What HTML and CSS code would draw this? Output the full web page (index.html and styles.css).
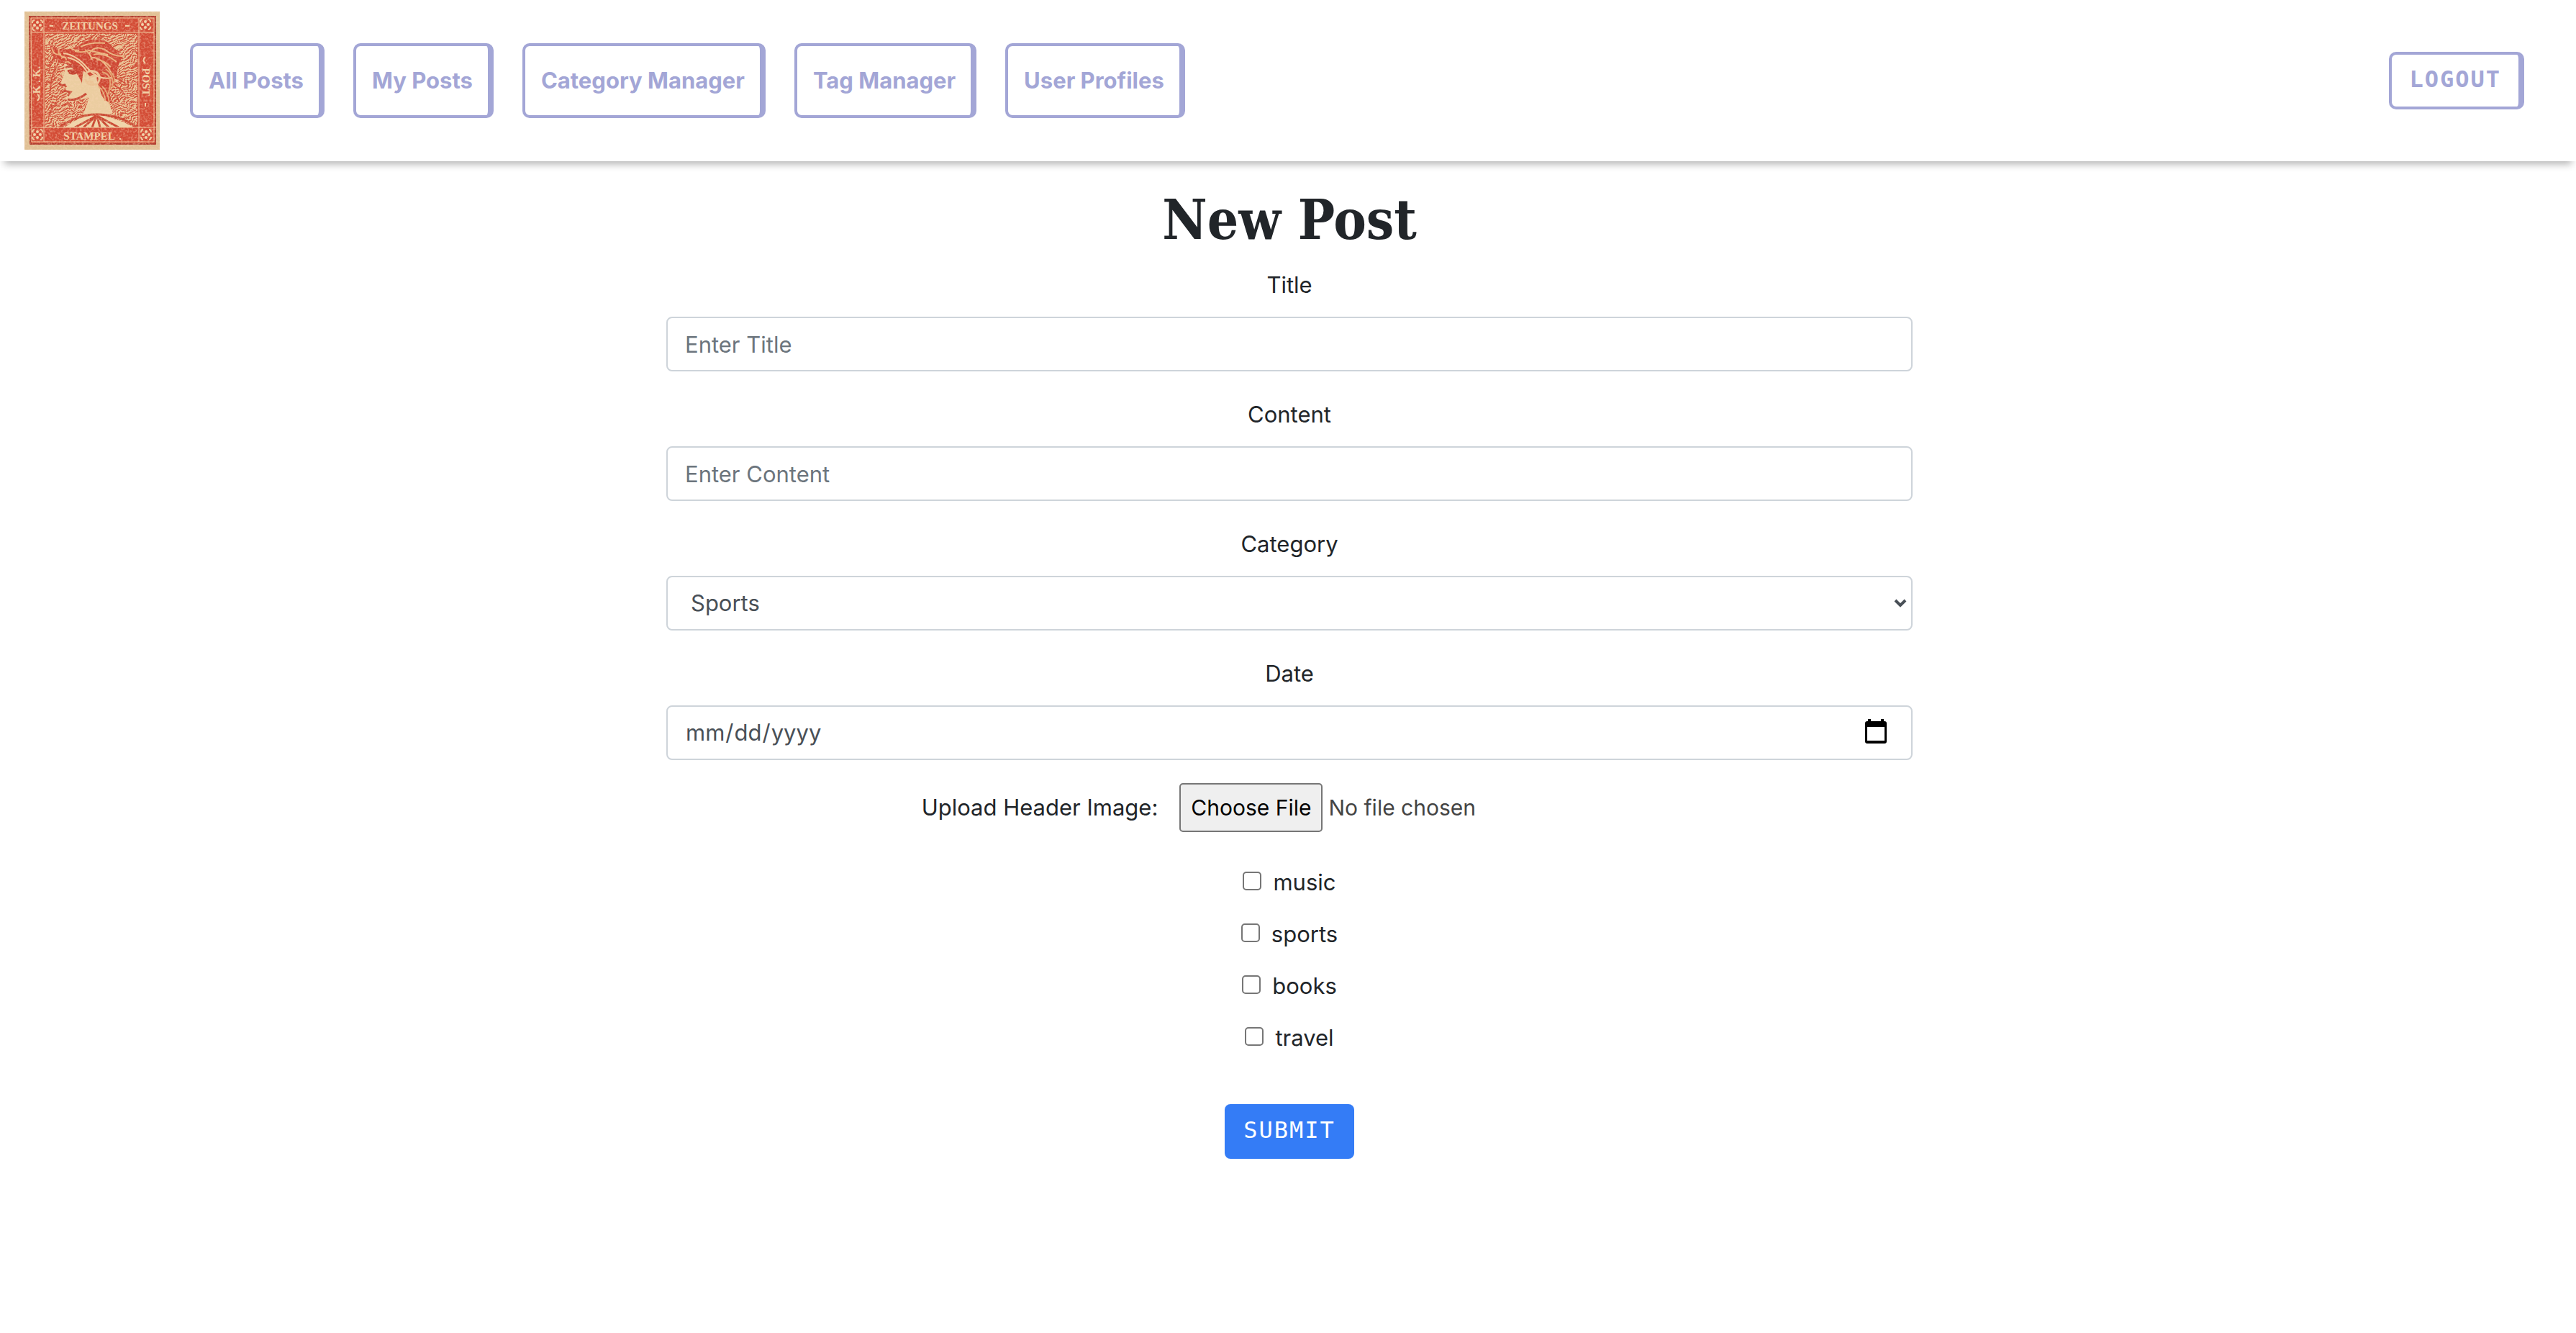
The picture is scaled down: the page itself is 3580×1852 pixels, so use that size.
FILE: index.html
```html
<!DOCTYPE html>
<html lang="en">
<head>
<meta charset="utf-8">
<title>New Post</title>
<link rel="stylesheet" href="styles.css">
</head>
<body>
<header class="navbar">
  <a class="brand" href="#" aria-label="Home">
    <svg class="stamp" viewBox="0 0 188 192" aria-hidden="true">
      <defs>
        <filter id="grain" x="0" y="0" width="1" height="1">
          <feTurbulence type="fractalNoise" baseFrequency="0.35" numOctaves="2" seed="4"/>
          <feColorMatrix values="0 0 0 0 0.95  0 0 0 0 0.66  0 0 0 0 0.46  0 3 0 0 -1.3"/>
          <feComposite in2="SourceGraphic" operator="in"/>
        </filter>
        <filter id="rough" x="0" y="0" width="1" height="1">
          <feTurbulence type="fractalNoise" baseFrequency="0.07" numOctaves="2" seed="9"/>
          <feDisplacementMap in="SourceGraphic" scale="12"/>
        </filter>
        <pattern id="lines" width="4" height="4" patternUnits="userSpaceOnUse" patternTransform="rotate(-28)">
          <path d="M0 2h4" stroke="#e9c596" stroke-width="2"/>
        </pattern>
        <clipPath id="panel"><path d="M29 31h128v130H29z"/></clipPath>
        <g id="rosette">
          <path d="M0 0h16v16H0z" fill="#d34c36"/>
          <path d="M4 1q-3 0-3 4M12 1q3 0 3 4M4 15q-3 0-3-4M12 15q3 0 3-4" fill="none" stroke="#ecc99c" stroke-width="2"/>
          <g fill="#f0d3a8"><circle cx="8" cy="4" r="2"/><circle cx="4" cy="8" r="2"/><circle cx="12" cy="8" r="2"/><circle cx="8" cy="12" r="2"/></g>
        </g>
      </defs>
      <path d="M0 0h188v192H0z" fill="#e0c196"/>
      <path d="M7 7h175v177H8z" fill="#d34c36" stroke="#b23f31" stroke-width="2"/>
      <path d="M9 9h171v172H10z" fill="none" stroke="#ecc293" stroke-width="1"/>
      <g clip-path="url(#panel)">
        <path d="M29 31h128v130H29z" fill="#cf4d37"/>
        <path d="M15 17h156v160H15z" fill="url(#lines)" filter="url(#rough)"/>
        <path d="M118 92q16 0 24 10M118 100q14 4 20 14M116 108q12 6 16 18M46 60q-10 8-12 24M44 76q-8 16-8 34M48 124q-10 8-14 22" fill="none" stroke="#cf4d37" stroke-width="2"/>
        <path d="M55 72Q60 65 72 66q14 6 25 20l12 10q-2 12-8 20l-11 2q-6 4-12 4l-16 4-5-5 3-6-3-3 1-6-9-3 7-18z" fill="#ebcda0"/>
        <path d="M90 113q14-3 17-14 9 8 10 24 3 13 6 18l-22 10-20-8q8-16 9-30z" fill="#ebcda0"/>
        <path d="M36 46q16 12 38 2 14-11 32-9 10 1 18 12 10 10 12 12l-7 15q2 12-6 20-8 12-1 30-16-5-17-21-6-10-4-19l-10 2-9-8q-2 12-2 18-9-21-22-27-12-2-18-11-5-8-4-16z" fill="#ce4633"/>
        <path d="M54 58q18 2 33 20t34 14M60 64q18 4 27 20" fill="none" stroke="#efc99b" stroke-width="2"/>
        <path d="M78 49q16-7 34-5M70 55q13 3 20-1l26 6M90 58q8-12 22-5 12 10 26 9M96 60q14-4 32 10M100 67q10 0 20 10M64 50q5 5 12 4M94 64q14 0 26 20M84 53q8 6 10 14" fill="none" stroke="#e9b27f" stroke-width="2"/>
        <path d="M38 50q2 12 13 9M48 52q-3 10 10 12M51 65q7-4 7 3M56 71q6-3 8 2" fill="none" stroke="#e9ad7a" stroke-width="2"/>
        <path d="M84 92q2-12 12-9 10 3 8 12-2 8-10 7-9-2-9-8M90 94q4-7 9-3M88 98q5-2 8 2" fill="none" stroke="#ebc395" stroke-width="3"/>
        <path d="M108 84q10 2 11 12t-4 22M113 80q12 8 9 26M103 104q9 8 9 20M120 84q6 6 5 14M108 104q8 6 10 24" fill="none" stroke="#e3a06e" stroke-width="2"/>
        <path d="M57 78q9-5 18-1M60 83q8-3 13 1-5 4-11 1" fill="#b93f30" stroke="#c54331" stroke-width="3"/>
        <path d="M48 99q3 5 8 3l2 3M55 110l9 2-4 5M60 122q12 3 26-8" fill="none" stroke="#c94935" stroke-width="3"/>
        <path d="M56 161q20-16 44-17 28 3 52 17z" fill="#efd5aa"/>
        <path d="M100 145L70 161M100 145l-18 16M100 145l-6 16M101 145l4 16M101 145l16 16M101 145l30 16M50 161q22-18 50-18 32 0 56 18" fill="none" stroke="#c94832" stroke-width="3"/>
        <circle cx="100" cy="146" r="4" fill="#cf4d37"/>
      </g>
      <g fill="none" stroke="#edc79a" stroke-width="1">
        <path d="M10 29h170M10 161h172M27 10v171M159 9v172"/>
      </g>
      <use href="#rosette" x="10" y="11"/><use href="#rosette" x="160" y="10"/>
      <use href="#rosette" x="10" y="163"/><use href="#rosette" x="161" y="163"/>
      <g class="stamp-text">
        <text x="91" y="25">ZEITUNGS</text>
        <text x="90" y="178">STAMPEL</text>
        <text transform="translate(22 95) rotate(-90)">K . K.</text>
        <text transform="translate(164 98) rotate(90)">POST</text>
      </g>
      <path d="M35 20h5M140 20h6M132 177h2M18 124q5-5 0-9M168 72q-5-4 0-9M168 127v5" fill="none" stroke="#efcda2" stroke-width="2"/>
      <path d="M0 0h188v192H0z" filter="url(#grain)" opacity="0.4"/>
    </svg>
  </a>
  <nav class="nav-links">
    <a class="outline nav-link" href="#">All Posts</a>
    <a class="outline nav-link" href="#">My Posts</a>
    <a class="outline nav-link" href="#">Category Manager</a>
    <a class="outline nav-link" href="#">Tag Manager</a>
    <a class="outline nav-link" href="#">User Profiles</a>
  </nav>
  <button class="outline logout" type="button">LOGOUT</button>
</header>
<main class="page">
  <h1 class="heading">New Post</h1>
  <form class="post-form">
    <div class="field">
      <label for="title">Title</label>
      <input class="control" id="title" type="text" placeholder="Enter Title">
    </div>
    <div class="field">
      <label for="content">Content</label>
      <input class="control" id="content" type="text" placeholder="Enter Content">
    </div>
    <div class="field">
      <label for="category">Category</label>
      <div class="select-wrap">
        <select class="control select" id="category"><option>Sports</option></select>
        <svg class="chevron" viewBox="0 0 18 12" aria-hidden="true"><path d="M2 2l7 7 7-7" fill="none" stroke="#495057" stroke-width="4"/></svg>
      </div>
    </div>
    <div class="field">
      <label for="date">Date</label>
      <input class="control date" id="date" type="date">
    </div>
    <div class="upload">
      <label for="image">Upload Header Image:</label>
      <input class="file" id="image" type="file">
    </div>
    <div class="tags">
      <label class="tag"><input class="check" type="checkbox">music</label>
      <label class="tag"><input class="check" type="checkbox">sports</label>
      <label class="tag"><input class="check" type="checkbox">books</label>
      <label class="tag"><input class="check" type="checkbox">travel</label>
    </div>
    <button class="submit" type="submit">SUBMIT</button>
  </form>
</main>
</body>
</html>
```

FILE: styles.css
```css
*, *::before, *::after { box-sizing: border-box; }

body {
  margin: 0;
  background: #fff;
  color: #212529;
  font-family: Inter, "Liberation Sans", sans-serif;
  font-size: 31px;
  line-height: 48px;
}

input, select, button { font: inherit; }

.navbar {
  display: flex;
  align-items: center;
  gap: 42px;
  padding: 16px 72px 16px 34px;
  background: #fff;
  box-shadow: 0 10px 10px -6px #b4b4b4;
}

.brand, .stamp { display: block; }
.stamp { width: 188px; height: 192px; }
.stamp-text {
  fill: #f0d0a5;
  font-family: "Liberation Serif", serif;
  font-size: 15px;
  font-weight: 700;
  text-anchor: middle;
}

.nav-links { display: flex; gap: 40px; }

.outline {
  border: 4px solid #a3a6d6;
  border-right-width: 8px;
  border-radius: 10px;
  background: #fff;
  color: #a3a6d6;
  font-weight: 700;
}
.nav-link {
  padding: 24px 21px 24px 22px;
  text-decoration: none;
}

.logout {
  margin-left: auto;
  padding: 10px 24px 14px;
  font-family: "DejaVu Sans Mono", monospace;
  font-size: 32px;
  letter-spacing: 2px;
}

.page {
  display: flex;
  flex-direction: column;
  align-items: center;
  padding: 34px 0 64px 4px;
}

.heading {
  margin: 0 0 18px;
  font-family: "DejaVu Serif Condensed", "DejaVu Serif", serif;
  font-size: 76px;
  font-weight: 700;
  line-height: 96px;
}

.post-form {
  display: flex;
  flex-direction: column;
  align-items: center;
  width: calc(50% - 56px);
}

.field {
  display: flex;
  flex-direction: column;
  gap: 20px;
  width: 100%;
  margin-bottom: 36px;
  text-align: center;
}

.control {
  width: 100%;
  height: 76px;
  padding: 12px 24px;
  border: 2px solid #ced4da;
  border-radius: 8px;
  background: #fff;
  color: #495057;
}
.control::placeholder { color: #6c757d; opacity: 1; }

.select-wrap { position: relative; }
.select { appearance: none; padding-left: 32px; }
.chevron {
  position: absolute;
  top: 32px;
  right: 8px;
  width: 18px;
  height: 12px;
  pointer-events: none;
}

.date::-webkit-calendar-picker-indicator {
  width: 30px;
  height: 34px;
  margin: 0 10px 4px;
  padding: 0;
  background: url("data:image/svg+xml,%3Csvg xmlns='http://www.w3.org/2000/svg' viewBox='0 0 30 34'%3E%3Cpath fill-rule='evenodd' d='M4 0h4v3h14V0h4v3h1q3 0 3 3v25q0 3-3 3H3q-3 0-3-3V6q0-3 3-3h1zM3 11v19h24V11z'/%3E%3C/svg%3E") center / contain no-repeat;
}

.upload {
  display: flex;
  align-items: center;
  gap: 30px;
  margin: -4px 0 46px;
}
.file { width: 664px; color: #444; font-size: 30px; }
.file::file-selector-button {
  height: 68px;
  margin: 0 8px 0 0;
  padding: 0 14px;
  border: 2px solid #767676;
  border-radius: 5px;
  background: #efefef;
  color: #000;
  font: inherit;
}

.tags {
  display: flex;
  flex-direction: column;
  align-items: center;
  gap: 24px;
  margin-bottom: 68px;
}
.tag { display: flex; align-items: center; gap: 16px; }
.check {
  appearance: none;
  width: 26px;
  height: 26px;
  margin: 0 0 4px;
  border: 2px solid #767676;
  border-radius: 5px;
  background: #fff;
}

.submit {
  height: 76px;
  padding: 0 26px 4px;
  border: 0;
  border-radius: 8px;
  background: #347cf6;
  color: #fff;
  font-family: "DejaVu Sans Mono", monospace;
  font-size: 32px;
  letter-spacing: 2px;
}
```
